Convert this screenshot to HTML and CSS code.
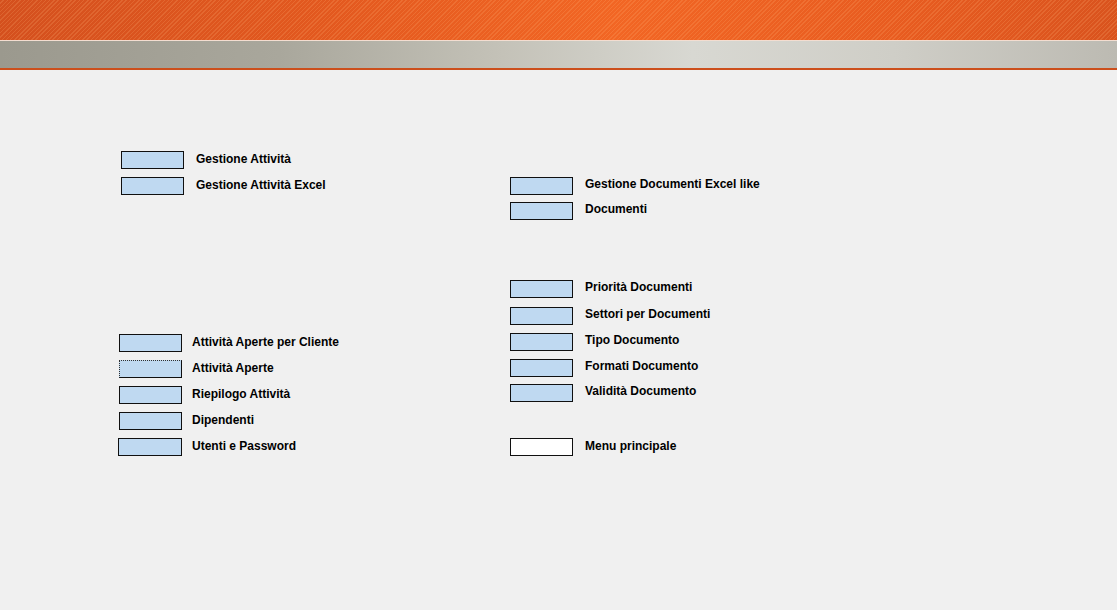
FILE: index.html
```html
<!DOCTYPE html>
<html lang="it">
<head>
<meta charset="utf-8">
<title>Menu Attività</title>
<link rel="stylesheet" href="styles.css">
</head>
<body>
<header class="header">
  <div class="header-top"></div>
  <div class="header-bar"></div>
</header>
<main class="main">
  <section class="col col-left">
    <div class="row row-first row-wide"><button class="btn"></button><span class="label">Gestione Attività</span></div>
    <div class="row row-wide"><button class="btn"></button><span class="label">Gestione Attività Excel</span></div>
    <div class="row row-gap-lg"><button class="btn"></button><span class="label">Attività Aperte per Cliente</span></div>
    <div class="row"><button class="btn btn-focus"></button><span class="label">Attività Aperte</span></div>
    <div class="row"><button class="btn"></button><span class="label">Riepilogo Attività</span></div>
    <div class="row"><button class="btn"></button><span class="label">Dipendenti</span></div>
    <div class="row row-last"><button class="btn btn-w64"></button><span class="label">Utenti e Password</span></div>
  </section>
  <section class="col col-right">
    <div class="row r1"><button class="btn"></button><span class="label">Gestione Documenti Excel like</span></div>
    <div class="row r2"><button class="btn"></button><span class="label">Documenti</span></div>
    <div class="row r3"><button class="btn"></button><span class="label">Priorità Documenti</span></div>
    <div class="row r4"><button class="btn"></button><span class="label">Settori per Documenti</span></div>
    <div class="row r5"><button class="btn"></button><span class="label">Tipo Documento</span></div>
    <div class="row r5"><button class="btn"></button><span class="label">Formati Documento</span></div>
    <div class="row r2"><button class="btn"></button><span class="label">Validità Documento</span></div>
    <div class="row r8"><button class="btn btn-white"></button><span class="label label-low">Menu principale</span></div>
  </section>
</main>
</body>
</html>
```

FILE: styles.css
```css
html, body {
  margin: 0;
  padding: 0;
  background: #f0f0f0;
  font-family: "Liberation Sans", Arial, sans-serif;
}

.header-top {
  height: 40px;
  background:
    repeating-linear-gradient(135deg, rgba(255, 190, 140, 0.0) 0px, rgba(255, 190, 140, 0.0) 2px, rgba(255, 180, 120, 0.2) 2px, rgba(255, 180, 120, 0.2) 3px),
    linear-gradient(90deg, #d4501e 0%, #e3591f 30%, #f26624 55%, #e85c20 80%, #d9531e 100%);
  border-bottom: 1px solid #f3ddd0;
}

.header-bar {
  height: 27px;
  background: linear-gradient(90deg, #9b998e 0%, #a9a79c 25%, #c4c2b8 45%, #d8d8d2 62%, #cfcec7 80%, #bcbab2 100%);
  border-bottom: 2px solid #cc4f1c;
}

.main {
  display: flex;
  padding: 81px 0 0 119px;
}

.col {
  display: flex;
  flex-direction: column;
}

.col-left {
  width: 391px;
}

.row {
  display: flex;
  align-items: flex-start;
  height: 18px;
  margin-top: 8px;
}

.row-first {
  margin-top: 0;
}

.row-wide .btn {
  margin-left: 2px;
}

.row-wide .label {
  margin-left: 12px;
}

.row-gap-lg {
  margin-top: 139px;
}

.row-last {
  margin-left: -1px;
}

.btn {
  box-sizing: border-box;
  width: 63px;
  height: 18px;
  margin: 0;
  padding: 0;
  background: #bfd9f1;
  border: 1px solid #101010;
  border-radius: 0;
  appearance: none;
}

.btn-w64 {
  width: 64px;
}

.btn-focus {
  border-top: 1px dotted #303030;
  border-left: 1px dotted #303030;
}

.btn-white {
  background: #ffffff;
}

.label {
  margin-left: 10px;
  margin-top: 1px;
  font-size: 12px;
  font-weight: bold;
  line-height: 14px;
  color: #000;
  white-space: nowrap;
}

.col-right .label {
  margin-left: 12px;
  margin-top: 0;
}

.col-right .label-low {
  margin-top: 1px;
}

.r1 { margin-top: 26px; }
.r2 { margin-top: 7px; }
.r3 { margin-top: 60px; }
.r4 { margin-top: 9px; }
.r5 { margin-top: 8px; }
.r8 { margin-top: 36px; }
```
